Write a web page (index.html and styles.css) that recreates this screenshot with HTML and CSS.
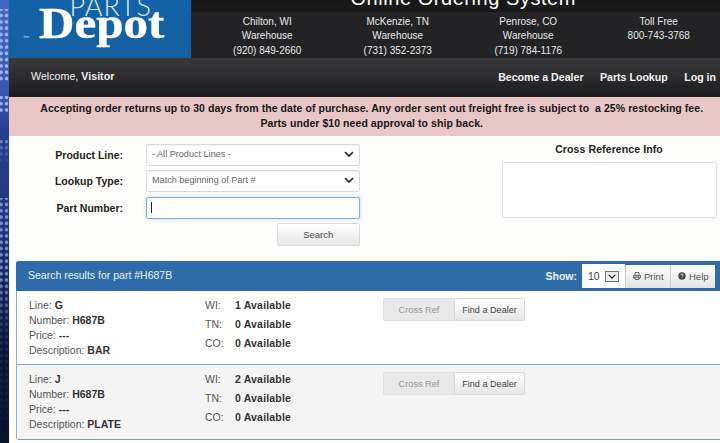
FILE: index.html
```html
<!DOCTYPE html>
<html lang="en">
<head>
<meta charset="utf-8">
<title>Parts Depot</title>
<link rel="stylesheet" href="styles.css">
</head>
<body>
<div class="dots"></div>
<div class="page">
  <header class="header">
    <div class="logo">
      <div class="logo-parts">PARTS</div>
      <div class="logo-depot"><span class="logo-the">the</span><span class="logo-word">Depot</span></div>
    </div>
    <div class="header-right">
      <div class="title">Online Ordering System</div>
      <div class="warehouses">
        <div class="wh">Chilton, WI<br>Warehouse<br>(920) 849-2660</div>
        <div class="wh">McKenzie, TN<br>Warehouse<br>(731) 352-2373</div>
        <div class="wh">Penrose, CO<br>Warehouse<br>(719) 784-1176</div>
        <div class="wh">Toll Free<br>800-743-3768</div>
      </div>
    </div>
  </header>
  <nav class="nav">
    <div class="welcome">Welcome, <b>Visitor</b></div>
    <div class="links"><a>Become a Dealer</a><a>Parts Lookup</a><a>Log in</a></div>
  </nav>
  <div class="notice">Accepting order returns up to 30 days from the date of purchase. Any order sent out freight free is subject to&nbsp; a 25% restocking fee.<br>Parts under $10 need approval to ship back.</div>
  <main class="main">
    <section class="lookup">
      <form class="form">
        <label class="lbl">Product Line:</label>
        <div class="field"><span>- All Product Lines -</span><svg class="chev" viewBox="0 0 10 6"><path d="M1 1l4 4 4-4" fill="none" stroke="#222" stroke-width="1.7"/></svg></div>
        <label class="lbl">Lookup Type:</label>
        <div class="field"><span>Match beginning of Part #</span><svg class="chev" viewBox="0 0 10 6"><path d="M1 1l4 4 4-4" fill="none" stroke="#222" stroke-width="1.7"/></svg></div>
        <label class="lbl">Part Number:</label>
        <div class="field focus"><i class="caret"></i></div>
        <div class="search-row"><div class="btn search">Search</div></div>
      </form>
      <aside class="xref">
        <div class="xref-title">Cross Reference Info</div>
        <div class="xref-box"></div>
      </aside>
    </section>
    <section class="panel">
      <div class="panel-head">
        <div class="panel-title">Search results for part #H687B</div>
        <div class="tools">
          <b class="show">Show:</b>
          <div class="show-sel"><span>10</span><span class="mini"><svg viewBox="0 0 10 6"><path d="M1 1l4 4 4-4" fill="none" stroke="#222" stroke-width="1.6"/></svg></span></div>
          <div class="tool"><svg class="ico" viewBox="0 0 12 12"><path d="M3 4V1h6v3M3 9H1V5h10v4H9M3 7.5h6V11H3z" fill="none" stroke="#444" stroke-width="1.3"/></svg>Print</div>
          <div class="tool"><svg class="ico" viewBox="0 0 12 12"><circle cx="6" cy="6" r="5.5" fill="#444"/><path d="M4.2 4.7c0-2.3 3.7-2.2 3.7-.1 0 1.400-1.800 1.400-1.800 2.700M6.100 8.200v1.300" fill="none" stroke="#eee" stroke-width="1.300"/></svg>Help</div>
        </div>
      </div>
      <article class="row">
        <div class="info">Line: <b>G</b><br>Number: <b>H687B</b><br>Price: <b>---</b><br>Description: <b>BAR</b></div>
        <div class="avail">
          <span>WI:</span><b>1 Available</b>
          <span>TN:</span><b>0 Available</b>
          <span>CO:</span><b>0 Available</b>
        </div>
        <div class="actions"><div class="btn off">Cross Ref</div><div class="btn dealer">Find a Dealer</div></div>
      </article>
      <article class="row alt">
        <div class="info">Line: <b>J</b><br>Number: <b>H687B</b><br>Price: <b>---</b><br>Description: <b>PLATE</b></div>
        <div class="avail">
          <span>WI:</span><b>2 Available</b>
          <span>TN:</span><b>0 Available</b>
          <span>CO:</span><b>0 Available</b>
        </div>
        <div class="actions"><div class="btn off">Cross Ref</div><div class="btn dealer">Find a Dealer</div></div>
      </article>
    </section>
  </main>
</div>
</body>
</html>
```
FILE: styles.css
```css
* { box-sizing: border-box; }
html, body { margin: 0; height: 100%; overflow: hidden; }
body {
  font-family: "Liberation Sans", Arial, sans-serif;
  background: linear-gradient(180deg, #4265c4 0, #3a58b4 90px, #27408f 130px, #21357f 220px, #12235f 290px, #0a1538 350px, #0a1230 443px);
  position: relative;
}
.dots {
  position: absolute;
  left: 0;
  top: 0;
  width: 9px;
  height: 443px;
  background-image: radial-gradient(circle at 1px 3px, rgba(175,195,245,.85) 1.500px, transparent 2.200px),
    radial-gradient(circle at 6.500px 3px, rgba(175,195,245,.85) 1.500px, transparent 2.200px);
  background-size: 9px 6.300px;
  -webkit-mask-image: linear-gradient(180deg, transparent 9px, #000 9px, #000 82px, transparent 82px, transparent 96px, #000 96px, #000 112px, transparent 112px, transparent 140px, rgba(0,0,0,.6) 140px, transparent 165px, transparent 198px, rgba(0,0,0,.75) 198px, rgba(0,0,0,.7) 280px, rgba(0,0,0,.15) 330px, transparent 443px);
  mask-image: linear-gradient(180deg, transparent 9px, #000 9px, #000 82px, transparent 82px, transparent 96px, #000 96px, #000 112px, transparent 112px, transparent 140px, rgba(0,0,0,.6) 140px, transparent 165px, transparent 198px, rgba(0,0,0,.75) 198px, rgba(0,0,0,.7) 280px, rgba(0,0,0,.15) 330px, transparent 443px);
}
.page { margin-left: 8.500px; margin-top: -22px; position: relative; }

.header { display: flex; height: 80px; background: #1c1c1e; }
.logo { width: 182px; background: linear-gradient(180deg, #1463ac, #14609f); color: #fff; overflow: hidden; flex: none; }
.logo-parts { font-family: Lato, "Liberation Sans", sans-serif; font-weight: 300; font-size: 27px; letter-spacing: 1px; color: #dfe9f4; line-height: 22px; margin-top: 17px; padding-left: 61px; }
.logo-depot { display: flex; align-items: baseline; font-family: "Liberation Serif", serif; font-weight: 700; font-size: 45px; line-height: 32px; margin-top: -10px; padding-left: 15px; }
.logo-word { transform: scaleX(1.090); transform-origin: 0 50%; -webkit-text-stroke: .4px #fff; margin-left: 8px; }
.logo-the { font-family: "Liberation Sans", sans-serif; font-size: 4px; font-weight: 400; color: #cfe0f0; width: 7px; margin-left: 0; }
.header-right { flex: 1; display: flex; flex-direction: column; min-width: 0; }
.title { height: 34px; background: linear-gradient(180deg, #111 0, #1b1b1c 100%); color: #fff; text-align: center; font-size: 20px; line-height: 24px; padding-top: 8px; padding-left: 16px; letter-spacing: .55px; white-space: nowrap; }
.warehouses { flex: 1; display: grid; grid-template-columns: repeat(4, 130.500px); padding-left: 11.500px; background: #232325; }
.wh { color: #e8e8e8; font-size: 10px; line-height: 14.500px; text-align: center; padding-top: 3px; white-space: nowrap; }

.nav { height: 39px; background: linear-gradient(180deg, #3a3a3c 0, #2c2c2e 50%, #1b1b1d 100%); display: flex; justify-content: space-between; align-items: center; padding: 0 4px 0 22.500px; color: #f0f0f0; font-size: 10.700px; }
.welcome { padding-bottom: 3px; }
.links { display: flex; gap: 16.500px; font-weight: 700; font-size: 10.600px; color: #f2f2f2; padding-bottom: 2px; }

.notice { height: 38.500px; background: #e8c6c6; color: #161616; font-size: 10.500px; font-weight: 700; line-height: 15px; text-align: center; letter-spacing: .06px; padding-top: 4px; padding-left: 15px; white-space: nowrap; }

.main { background: #fdfdfb; padding-top: 8px; height: 310px; }
.lookup { display: flex; justify-content: space-between; height: 117.500px; }
.form { width: 351.500px; height: 103px; display: grid; grid-template-columns: 114.500px 1fr; column-gap: 23px; row-gap: 4.500px; grid-auto-rows: 22px; font-size: 11px; align-items: center; }
.lbl { text-align: right; font-weight: 700; color: #222; font-size: 10.500px; }
.field { height: 22px; border: 1px solid #d8d8d8; border-radius: 2px; background: #fff; display: flex; align-items: center; justify-content: space-between; padding: 0 5px 2px 5px; color: #666; font-size: 9.100px; box-shadow: inset 0 1px 1px rgba(0,0,0,.05); }
.chev { width: 10px; height: 6px; }
.focus { border: 1px solid #84b1d6; box-shadow: 0 0 3px rgba(100,160,210,.5); padding-left: 4px; padding-bottom: 0; justify-content: flex-start; }
.caret { display: block; width: 1px; height: 11px; background: #222; }
.search-row { grid-column: 2; display: flex; justify-content: flex-end; }
.btn { display: flex; align-items: center; justify-content: center; font-size: 9.500px; color: #444; border: 1px solid #d9d9d9; border-radius: 2px; background: linear-gradient(180deg, #fff, #e6e6e6); }
.search { width: 83.500px; height: 23px; }
.xref { width: 215px; margin-right: 3.500px; }
.xref-title { text-align: center; font-weight: 700; font-size: 10.500px; color: #222; line-height: 12px; margin-bottom: 7px; margin-top: -1px; letter-spacing: .1px; }
.xref-box { height: 56px; border: 1px solid #dedede; border-radius: 3px; background: #fff; }

.panel { margin: 0 0 0 7.500px; border-radius: 3px 0 0 3px; border-left: 1px solid #94aec6; border-bottom: 1px solid #7f9db8; }
.panel-head { height: 30px; margin-left: -1px; background: #2d6ca9; border-radius: 3px 0 0 0; color: #eaf2f8; display: flex; justify-content: space-between; align-items: center; padding: 0 5px 0 12px; font-size: 11px; }
.panel-title { font-size: 10.500px; padding-bottom: 2px; }
.tools { display: flex; align-items: center; height: 30px; }
.show { margin-right: 5px; font-size: 10.500px; }
.show-sel { width: 43px; height: 24px; background: #fff; color: #444; font-size: 10.500px; display: flex; align-items: center; justify-content: space-between; padding: 0 6px 0 6px; }
.mini { width: 14px; height: 11px; border: 1px solid #777; background: #eee; display: flex; align-items: center; justify-content: center; }
.mini svg { width: 8px; height: 5px; }
.tool { height: 23px; width: 45px; display: flex; align-items: center; gap: 3px; padding-left: 7px; font-size: 9.500px; color: #555; background: linear-gradient(180deg, #fff, #e3e3e3); border-left: 1px solid #ccc; }
.ico { width: 8px; height: 8px; }

.row { height: 74px; display: flex; background: #fff; border-bottom: 1px solid #88a4bc; color: #555; font-size: 10.500px; padding: 7px 0 0 12px; }
.row.alt { background: #f4f4f4; border-bottom: 0; height: 73.500px; }
.info { width: 176px; line-height: 15.100px; }
.info b, .avail b { color: #333; }
.avail { width: 178px; display: grid; grid-template-columns: 30px 1fr; grid-auto-rows: 19px; line-height: 14px; align-content: start; }
.avail b { letter-spacing: .18px; }
.actions { display: flex; height: 23px; }
.btn.off { width: 72px; background: #e8e8e8; color: #9a9a9a; border-radius: 2px 0 0 2px; border-color: #e0e0e0; font-size: 9.200px; }
.btn.dealer { width: 71px; border-radius: 0 2px 2px 0; color: #444; margin-left: -1px; font-size: 9.100px; }
```
